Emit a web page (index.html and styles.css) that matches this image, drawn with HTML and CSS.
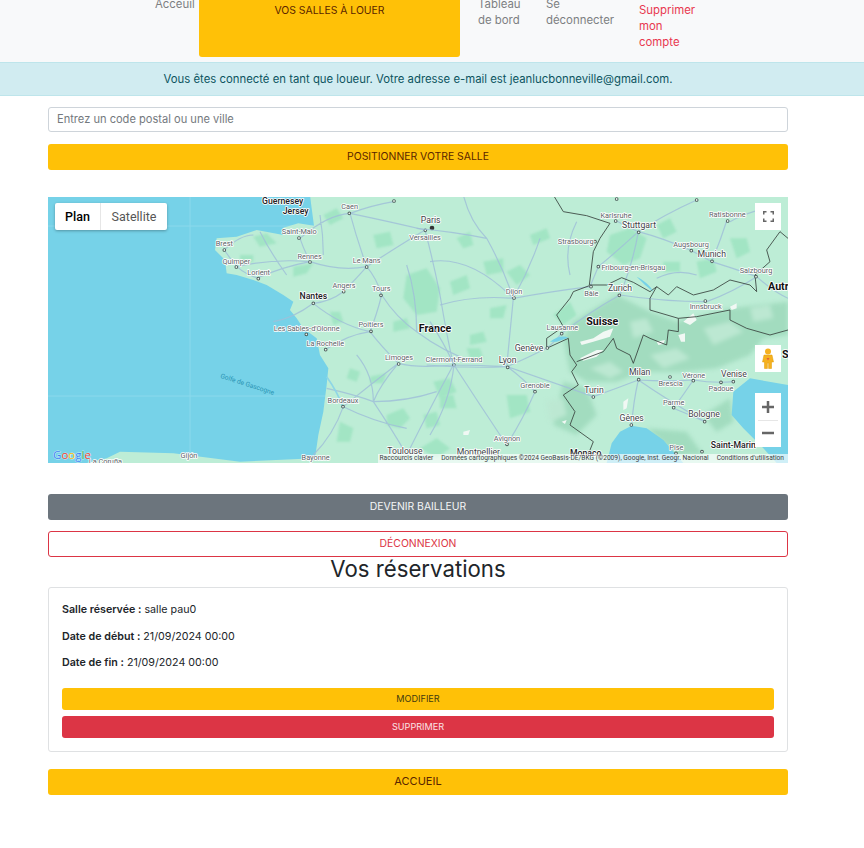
FILE: index.html
```html
<!DOCTYPE html>
<html lang="fr">
  <head>
    <meta charset="UTF-8">
    <title>Vos salles à louer</title>
    <link rel="stylesheet" href="styles.css">
  </head>
  <body>
    <nav class="topnav">
      <a class="nav-link nav-home" href="#">Acceuil</a>
      <a class="nav-btn" href="#">VOS SALLES À LOUER</a>
      <a class="nav-link nav-board" href="#">Tableau de bord</a>
      <a class="nav-link nav-logout" href="#">Se déconnecter</a>
      <a class="nav-link nav-delete" href="#">Supprimer mon compte</a>
    </nav>
    <div class="alert">Vous êtes connecté en tant que loueur. Votre adresse e-mail est jeanlucbonneville@gmail.com.</div>

    <main class="container">
      <input class="search" type="text" placeholder="Entrez un code postal ou une ville">
      <button class="btn btn-yellow btn-position" type="button">POSITIONNER VOTRE SALLE</button>

      <div class="map">
        <svg class="map-svg" width="740" height="266" viewBox="0 0 740 266">
          <defs>
            <path id="dots-left" d="M1062 18h0M928 55h0M1156 106h0M777 129h0M553 165h0M589 216h0M655 251h0M810 201h0M980 216h0M911 290h0M1023 301h0M820 325h0M799 418h0M857 464h0M993 409h0M1076 507h0M1242 510h0M909 635h0"/>
            <path id="dots-right" d="M560 12h0M800 15h0M557 78h0M893 78h0M626 112h0M784 167h0M846 199h0M495 140h0M505 215h0M978 245h0M483 275h0M568 301h0M252 309h0M826 318h0M395 416h0M352 459h0M233 517h0M315 590h0M490 606h0M720 546h0M626 554h0M790 557h0M873 562h0M910 560h0M731 638h0M824 680h0M604 690h0M231 748h0M738 775h0M816 770h0"/>
          </defs>
          <rect width="740" height="266" fill="#76d2e8"/>
          <path class="grid" d="M0 29H740M0 199H740M142 0V266"/>
          <!-- left half, coordinates read off the 3x crop -->
          <g transform="translate(-8 -2) scale(.33333)">
            <path class="land" d="M810 0L815 40 822 92 775 85 730 98 730 120 650 105 590 125 530 130 525 165 540 180 555 195 560 235 590 240 640 255 680 270 730 300 760 320 750 345 770 370 790 400 830 430 840 480 865 520 860 570 850 650 835 720 825 790 600 800 400 775 240 770 200 790 140 804 2400 804 2400 0Z"/>
            <path class="patch" d="M1100 240l60 -20 40 60 -10 70 -60 10 -40 -50ZM760 215l60 -10 -20 30 -40 10ZM1040 660l50 -20 20 30 -30 30 -40 -10ZM900 680l40 20 -10 40 -40 0ZM990 545l50 -10 -10 30 -40 0ZM640 125l40 -10 30 30 -50 10ZM1140 760l50 -30 40 30 -40 30ZM1060 380l40 -10 10 30 -50 10ZM850 60l40 -20 20 30 -40 20ZM1000 120l50 -10 10 40 -50 10ZM600 180l40 0 0 20 -40 5ZM870 350l30 0 10 30 -30 10ZM1180 560l50 -10 20 40 -50 20ZM1280 460l40 0 10 30 -40 0ZM1330 200l60 -10 0 40 -50 10ZM1250 130l40 -20 10 40 -30 10ZM930 520l30 10 -10 30 -30 -10ZM1150 660l40 -10 10 40 -40 10Z"/>
            <path class="road" d="M810 200Q790 160 780 130M810 200Q730 215 650 250M810 200Q700 190 590 215M810 200Q900 230 980 215Q1080 150 1155 105M980 215Q1010 250 1025 300Q1070 370 1130 410M980 215Q950 250 910 290Q870 320 820 325M820 325Q760 370 700 380M820 325Q900 390 990 410Q1020 450 1075 505M990 410Q920 420 855 465M1075 505Q990 570 910 635M1075 505Q1020 570 1000 620Q1060 710 1100 780M910 635Q880 720 820 780M780 130Q860 60 930 55Q1000 30 1060 20M930 55Q1050 80 1155 105M1025 300Q1010 360 990 410M553 165Q600 120 640 120M590 215Q570 190 553 165M655 250Q620 240 590 215M980 215Q950 130 930 55M1130 410Q1210 470 1300 500M840 60Q850 120 850 180M660 110Q690 170 740 240M1100 210Q1130 300 1130 410M1155 105Q1180 200 1200 300Q1220 420 1240 510M1240 510Q1130 520 1075 505M1240 510Q1180 620 1100 780M910 635Q1000 680 1100 700M1000 620Q1100 620 1190 590M950 480Q1000 540 1000 620M860 580Q950 600 1000 620"/>
            <path class="river" d="M860 545C885 580 900 610 910 640"/>
            <text class="sea" transform="translate(540 548) rotate(18)">Golfe de Gascogne</text>
            <use href="#dots-left" class="dot-out"/>
            <use href="#dots-left" class="dot-in"/>
            <circle cx="1176" cy="99" r="7" fill="#333"/>
            <text class="town strong" x="728" y="26">Guernesey</text>
            <text class="town strong" x="767" y="58">Jersey</text>
            <text class="city" x="929" y="42">Caen</text>
            <text class="city" x="778" y="116">Saint-Malo</text>
            <text class="town" x="1172" y="84">Paris</text>
            <text class="city" x="1155" y="134">Versailles</text>
            <text class="city" x="553" y="152">Brest</text>
            <text class="city" x="589" y="207">Quimper</text>
            <text class="city" x="656" y="240">Lorient</text>
            <text class="city" x="809" y="191">Rennes</text>
            <text class="city" x="980" y="204">Le Mans</text>
            <text class="city" x="912" y="278">Angers</text>
            <text class="city" x="1024" y="288">Tours</text>
            <text class="town strong" x="820" y="311">Nantes</text>
            <text class="city" x="800" y="409">Les Sables-d'Olonne</text>
            <text class="city" x="993" y="396">Poitiers</text>
            <text class="country" x="1185" y="412">France</text>
            <text class="city" x="856" y="452">La Rochelle</text>
            <text class="city" x="1077" y="494">Limoges</text>
            <text class="city" x="1242" y="501">Clermont-Ferrand</text>
            <text class="city" x="909" y="623">Bordeaux</text>
            <text class="town" x="1095" y="778">Toulouse</text>
            <text class="city" x="827" y="795">Bayonne</text>
            <text class="city" x="447" y="790">Gijón</text>
            <text class="city" x="196" y="808">La Coruña</text>
          </g>
          <!-- right half -->
          <g transform="translate(382 -2) scale(.33333)">
            <path class="patch" d="M230 230l40 -20 30 30 -40 30ZM60 260l50 -20 10 40 -50 20ZM370 360l50 -40 20 40 -40 30ZM540 120l60 -20 50 30 -20 60 -50 20 -50 -40ZM800 200l50 -10 10 40 -50 20ZM180 340l50 -10 -10 40 -40 0ZM230 600l60 0 10 50 -60 20ZM900 130l50 0 10 40 -40 20ZM680 90l40 -20 20 40 -40 20ZM300 120l50 -20 10 30 -50 20ZM120 420l40 -10 10 30 -50 10ZM30 600l40 0 10 40 -50 0ZM700 200l50 0 0 30 -50 0ZM980 70l50 -20 10 40 -40 10Z"/>
            <g class="relief-wrap">
              <path class="relief" d="M430 380L560 300 660 350 740 380 900 340 1074 320 1074 420 1000 430 960 480 860 520 760 530 640 530 560 560 470 560 420 530 400 430ZM400 560l70 20 30 80 -60 60 -70 -30ZM650 700l120 10 50 70 -80 0ZM820 660l80 -50 10 70 -50 30Z"/>
              <path class="relief-light" d="M480 520l60 -20 40 30 -40 20ZM660 480l80 -20 40 30 -80 30ZM820 400l80 -20 40 30 -90 40ZM600 380l50 -10 20 40 -60 20ZM350 620l50 -10 10 50 -50 20ZM960 340l60 -10 10 40 -60 10Z"/>
            </g>
            <path class="snow" d="M450 440l40 -10 30 -20 30 -10 -10 25 -50 15 -35 10ZM450 490l50 -25 20 0 -20 20 -40 12ZM760 380l30 -25 10 20 -20 15ZM745 420l20 -5 0 25 -12 0ZM680 440l25 -5 -5 12 -15 3ZM900 335l20 -10 0 15 -15 5ZM580 620l15 -10 -5 30 -10 5ZM100 710l20 -5 -5 15 -15 0ZM395 680l15 -5 -5 12Z"/>
            <path class="road" d="M250 310Q240 410 230 515Q110 520 -10 510M250 310Q220 220 170 130Q70 110 -40 100M250 310Q360 290 480 275M232 515Q290 490 350 460Q375 440 395 415Q480 350 570 300Q610 200 625 110M232 515Q280 550 315 590Q280 670 230 750M232 515Q360 560 490 605Q560 580 625 555Q720 620 825 680M625 555Q710 560 790 555Q850 565 910 560M625 555Q610 620 605 690M790 555Q760 600 730 640Q780 660 825 680M625 110Q590 95 560 78M625 110Q700 130 780 165Q810 180 845 200Q910 220 980 245M845 200Q870 140 890 78M625 110Q700 60 800 15M570 300Q700 320 830 320Q910 290 980 245M505 215Q560 170 625 110M505 215Q490 250 480 275M72 510Q150 510 230 515M72 510Q150 630 230 750M100 0Q120 80 170 130M0 200Q120 180 250 310M30 330Q130 300 250 310M0 380Q40 440 72 510M72 510Q60 620 0 720M330 130Q300 220 250 310M900 80Q950 50 1050 30M980 245Q1030 290 1074 310M420 240Q400 160 440 80M680 250Q740 220 800 240"/>
            <path class="border" d="M370 0L400 50 470 62 540 85 510 130 490 170 478 270 530 270 575 248 610 262 660 290 680 275 715 300 740 275 790 300 850 285 900 255 960 270 980 290 975 240 1020 200 1010 165 1050 110 1074 130M478 272L430 290 420 310 380 360 400 395 350 430 350 460 415 430 420 480 440 510 425 530 445 570 400 600 435 650 420 690 490 740 470 790M440 500L520 470 550 430 560 460 600 480 610 505 640 420 660 430 710 450 715 405 745 410 745 370 660 345 660 310 680 275M745 370L800 365 900 345 900 375 950 400 1020 420 1074 405"/>
            <path class="sea-fill" d="M530 804L545 745 570 710 605 692 650 700 700 735 730 770 760 804ZM1074 570L960 550 910 590 905 660 940 700 1000 760 1040 804 1074 804ZM360 440C380 425 400 420 415 428L380 440ZM620 245C640 255 660 270 670 290L645 270Z"/>
            <use href="#dots-right" class="dot-out"/>
            <use href="#dots-right" class="dot-in"/>
            <text class="city" x="558" y="68">Karlsruhe</text>
            <text class="town" x="627" y="98">Stuttgart</text>
            <text class="city" x="892" y="66">Ratisbonne</text>
            <text class="city" x="437" y="147">Strasbourg</text>
            <text class="city" x="783" y="157">Augsbourg</text>
            <text class="town" x="845" y="186">Munich</text>
            <text class="city" x="610" y="224">Fribourg-en-Brisgau</text>
            <text class="city" x="978" y="233">Salzbourg</text>
            <text class="country" x="1045" y="284">Autr</text>
            <text class="town" x="570" y="288">Zurich</text>
            <text class="city" x="252" y="297">Dijon</text>
            <text class="city" x="484" y="304">Bâle</text>
            <text class="city" x="827" y="342">Innsbruck</text>
            <text class="country" x="517" y="390">Suisse</text>
            <text class="city" x="397" y="405">Lausanne</text>
            <text class="town" x="297" y="468">Genève</text>
            <text class="town" x="233" y="503">Lyon</text>
            <text class="country" x="1066" y="490">S</text>
            <text class="city" x="315" y="579">Grenoble</text>
            <text class="town" x="629" y="541">Milan</text>
            <text class="city" x="722" y="572">Brescia</text>
            <text class="city" x="791" y="548">Vérone</text>
            <text class="town" x="912" y="545">Venise</text>
            <text class="city" x="873" y="589">Padoue</text>
            <text class="town" x="492" y="593">Turin</text>
            <text class="city" x="731" y="630">Parme</text>
            <text class="town" x="822" y="667">Bologne</text>
            <text class="town" x="605" y="677">Gênes</text>
            <text class="city" x="231" y="738">Avignon</text>
            <text class="town" x="145" y="779">Montpellier</text>
            <text class="town strong" x="467" y="783">Monaco</text>
            <text class="town strong" x="910" y="758">Saint-Marin</text>
            <text class="city" x="739" y="766">Pise</text>
          </g>
          <text class="google" x="5" y="262"><tspan fill="#4285f4">G</tspan><tspan fill="#ea4335">o</tspan><tspan fill="#fbbc05">o</tspan><tspan fill="#4285f4">g</tspan><tspan fill="#34a853">l</tspan><tspan fill="#ea4335">e</tspan></text>
        </svg>

        <div class="map-type">
          <span class="map-type-on">Plan</span>
          <span class="map-type-off">Satellite</span>
        </div>
        <div class="map-ctl map-full">
          <svg width="11" height="11" viewBox="0 0 11 11"><path d="M0.750 3.500V0.750H3.500M7.500 0.750H10.250V3.500M10.250 7.500V10.250H7.500M3.500 10.250H0.750V7.500" fill="none" stroke="#666" stroke-width="1.500"/></svg>
        </div>
        <div class="map-ctl map-peg">
          <svg width="14" height="21" viewBox="0 0 14 21">
            <circle cx="7" cy="3.500" r="3" fill="#f5b120"/>
            <path d="M3 7H11L12.500 14H10.500V20.500H7.600V15H6.400V20.500H3.500V14H1.500Z" fill="#f5b120" stroke="#e09a00" stroke-width=".5"/>
            <path d="M5.500 10H8.500L7 12.500Z" fill="#e2603a"/>
          </svg>
        </div>
        <div class="map-zoom">
          <svg width="26" height="27" viewBox="0 0 26 27"><path d="M7 14H19M13 8V20" stroke="#666" stroke-width="2.500"/></svg>
          <div class="map-zoom-sep"></div>
          <svg width="26" height="26" viewBox="0 0 26 26"><path d="M7 13H19" stroke="#666" stroke-width="2.500"/></svg>
        </div>
        <div class="map-attrib">
          <span>Raccourcis clavier</span>
          <span>Données cartographiques ©2024 GeoBasis-DE/BKG (©2009), Google, Inst. Geogr. Nacional</span>
          <span>Conditions d'utilisation</span>
        </div>
      </div>

      <button class="btn btn-grey" type="button">DEVENIR BAILLEUR</button>
      <button class="btn btn-outline" type="button">DÉCONNEXION</button>

      <h2 class="title">Vos réservations</h2>

      <section class="card">
        <p class="card-line"><strong>Salle réservée :</strong> salle pau0</p>
        <p class="card-line"><strong>Date de début :</strong> 21/09/2024 00:00</p>
        <p class="card-line"><strong>Date de fin :</strong> 21/09/2024 00:00</p>
        <button class="btn btn-small btn-edit" type="button">MODIFIER</button>
        <button class="btn btn-small btn-red" type="button">SUPPRIMER</button>
      </section>

      <button class="btn btn-yellow btn-home" type="button">ACCUEIL</button>
    </main>
  </body>
</html>
```

FILE: styles.css
```css
body {
  margin: 0;
  font-family: Inter, "Open Sans", sans-serif;
  font-size: 11px;
  color: #212529;
  background-color: #ffffff;
}

/* top nav, its first line is cut by the window */
.topnav {
  display: flex;
  align-items: flex-start;
  height: 62px;
  padding-left: 155px;
  background-color: #f8f9fa;
  overflow: hidden;
}
.nav-link {
  display: block;
  margin-top: -4px;
  font-size: 11.400px;
  line-height: 16px;
  color: #7d7f82;
  text-decoration: none;
}
.nav-home {
  width: 44px;
}
.nav-btn {
  display: block;
  width: 261px;
  height: 57px;
  padding-top: 3px;
  box-sizing: border-box;
  border-radius: 0 0 3px 3px;
  background-color: #ffc107;
  color: #5a2500;
  font-size: 10.400px;
  line-height: 16px;
  text-align: center;
  text-decoration: none;
}
.nav-board {
  width: 50px;
  margin-left: 18px;
}
.nav-logout {
  width: 74px;
  margin-left: 18px;
}
.nav-delete {
  width: 60px;
  margin-top: 2px;
  margin-left: 19px;
  color: #e8384f;
}

.alert {
  height: 32px;
  padding-right: 28px;
  border-top: 1px solid #bee5eb;
  border-bottom: 1px solid #bee5eb;
  background-color: #d1ecf1;
  color: #0c5460;
  font-size: 11.350px;
  line-height: 32px;
  text-align: center;
}

.container {
  width: 740px;
  margin: 0 auto 0 48px;
  padding-top: 11px;
}
.search {
  display: block;
  width: 100%;
  height: 25px;
  box-sizing: border-box;
  padding: 0 8px 2px;
  border: 1px solid #ced4da;
  border-radius: 3px;
  font-family: inherit;
  font-size: 11.100px;
  color: #495057;
}
.search::placeholder {
  color: #74797e;
}

.btn {
  display: block;
  width: 100%;
  height: 26px;
  padding: 0 0 2px;
  border: 1px solid transparent;
  border-radius: 3px;
  font-family: inherit;
  font-size: 10.400px;
  cursor: pointer;
}
.btn-yellow {
  background-color: #ffc107;
  color: #5a2500;
}
.btn-position {
  margin-top: 12px;
}
.btn-grey {
  margin-top: 31px;
  background-color: #6c757d;
  color: #f4f5f6;
}
.btn-outline {
  margin-top: 11px;
  border-color: #dc3545;
  background-color: #ffffff;
  color: #dc3545;
}
.btn-small {
  height: 22px;
  padding: 0;
  font-size: 9.100px;
}
.btn-edit {
  margin-top: 16px;
  background-color: #ffc107;
  color: #3f3a10;
}
.btn-red {
  margin-top: 6px;
  background-color: #dc3545;
  color: #fbe3e6;
}
.btn-home {
  margin-top: 17px;
  font-size: 11px;
}

/* map */
.map {
  position: relative;
  height: 266px;
  margin-top: 27px;
  overflow: hidden;
}
.map-svg {
  display: block;
}
.grid {
  fill: none;
  stroke: #8bd9ec;
  stroke-width: 1;
}
.land {
  fill: #bdedd6;
}
.patch {
  fill: #a2e5c4;
  filter: blur(3px);
}
.relief-wrap {
  filter: blur(6px);
}
.relief {
  fill: #a2dcbf;
}
.relief-light {
  fill: #bce8d2;
}
.snow {
  fill: #f1f8f4;
  filter: blur(1px);
}
.sea-fill {
  fill: #76d2e8;
}
.road {
  fill: none;
  stroke: #a0bfd8;
  stroke-width: 3.500;
  opacity: .85;
}
.river {
  fill: none;
  stroke: #8ed6e6;
  stroke-width: 5;
}
.border {
  fill: none;
  stroke: #3a4440;
  stroke-width: 2.600;
}
.dot-out,
.dot-in {
  fill: none;
  stroke-linecap: round;
}
.dot-out {
  stroke: #4b5b58;
  stroke-width: 11;
}
.dot-in {
  stroke: #e8f4ee;
  stroke-width: 5.500;
}
.map-svg text {
  font-family: Roboto, sans-serif;
  text-anchor: middle;
  paint-order: stroke;
  stroke: #ffffff;
  stroke-width: 5;
  stroke-linejoin: round;
  fill: #5b6367;
}
.map-svg .city {
  font-size: 22px;
}
.map-svg .town {
  font-size: 26px;
  fill: #3c4246;
}
.map-svg .strong {
  font-weight: 500;
  fill: #202124;
}
.map-svg .country {
  font-size: 32px;
  font-weight: 700;
  fill: #111111;
}
.map-svg .sea {
  font-size: 20px;
  text-anchor: start;
  stroke: none;
  fill: #2a94b4;
}
.map-svg .google {
  font-family: "Open Sans", sans-serif;
  font-size: 11.500px;
  text-anchor: start;
  stroke: #ffffff;
  stroke-width: 1;
  stroke-opacity: .6;
}
.map-type {
  position: absolute;
  top: 6px;
  left: 7px;
  display: flex;
  height: 27px;
  border-radius: 2px;
  background-color: #ffffff;
  box-shadow: 0 1px 3px rgba(0, 0, 0, .3);
  font-family: Roboto, sans-serif;
  font-size: 12.500px;
  line-height: 27px;
}
.map-type-on {
  width: 45px;
  border-right: 1px solid #e6e6e6;
  font-weight: 500;
  color: #000000;
  text-align: center;
}
.map-type-off {
  width: 66px;
  color: #565656;
  text-align: center;
}
.map-ctl {
  position: absolute;
  left: 707px;
  display: flex;
  align-items: center;
  justify-content: center;
  width: 26px;
  height: 27px;
  background-color: #ffffff;
}
.map-full {
  top: 6px;
}
.map-peg {
  top: 148px;
}
.map-zoom {
  position: absolute;
  top: 196px;
  left: 707px;
  width: 26px;
  height: 54px;
  background-color: #ffffff;
}
.map-zoom svg {
  display: block;
}
.map-zoom-sep {
  width: 20px;
  height: 1px;
  margin: 0 3px;
  background-color: #e6e6e6;
}
.map-zoom svg:last-child {
  margin-top: -1px;
}
.map-attrib {
  position: absolute;
  right: 0;
  bottom: 0;
  display: flex;
  gap: 8px;
  height: 9px;
  padding: 0 4px 0 2px;
  background-color: rgba(255, 255, 255, .65);
  font-family: Roboto, sans-serif;
  font-size: 6.650px;
  line-height: 9px;
  white-space: nowrap;
  color: #3c4043;
}

.title {
  margin: 0;
  height: 30px;
  font-size: 22.200px;
  font-weight: 400;
  line-height: 24px;
  text-align: center;
}

.card {
  height: 165px;
  box-sizing: border-box;
  padding: 14px 13px 13px;
  border: 1px solid #dfe1e3;
  border-radius: 3px;
}
.card-line {
  margin: 0 0 10px;
  font-size: 10.700px;
  line-height: 16.500px;
}
.card-line strong {
  font-weight: 600;
}
```
